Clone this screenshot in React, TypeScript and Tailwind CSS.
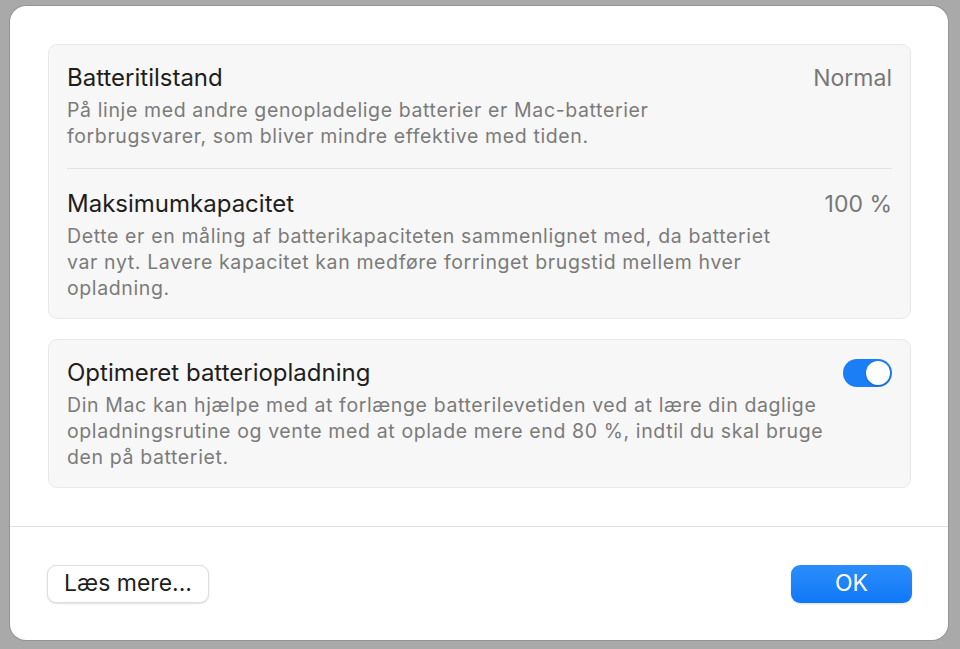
import React from 'react';

const font = { fontFamily: 'Inter, "Liberation Sans", sans-serif' };

const Desc: React.FC<{ lines: string[] }> = ({ lines }) => (
  <div className="mt-[5px] text-[19.5px] leading-[26px] text-[#7b7b7b] tracking-[0.62px]">
    {lines.map((l, i) => (
      <div key={i} className="whitespace-nowrap">{l}</div>
    ))}
  </div>
);

export default function App() {
  return (
    <div
      className="w-[960px] h-[649px] overflow-hidden bg-[#a9a9a9] pt-[6px] pl-[10px] antialiased"
      style={font}
    >
      <div className="w-[938px] h-[634px] bg-white rounded-[16px] flex flex-col shadow-[0_0_0_1px_rgba(0,0,0,0.12)]">
        <div className="pl-[38px] pr-[37px] pt-[38px] flex flex-col gap-[20px]">
          {/* battery health + capacity */}
          <div className="bg-[#f7f7f7] border border-[#e9e9e9] rounded-[9px] px-[18px]">
            <div className="pt-[19px] pb-[19px] border-b border-[#e3e3e3]">
              <div className="flex justify-between items-center h-[28px]">
                <span className="text-[24px] text-[#1e1e1e]">Batteritilstand</span>
                <span className="text-[23px] text-[#777]">Normal</span>
              </div>
              <Desc
                lines={[
                  'På linje med andre genopladelige batterier er Mac-batterier',
                  'forbrugsvarer, som bliver mindre effektive med tiden.',
                ]}
              />
            </div>
            <div className="pt-[21px] pb-[17px]">
              <div className="flex justify-between items-center h-[28px]">
                <span className="text-[24px] text-[#1e1e1e]">Maksimumkapacitet</span>
                <span className="text-[23px] text-[#777]">100 %</span>
              </div>
              <Desc
                lines={[
                  'Dette er en måling af batterikapaciteten sammenlignet med, da batteriet',
                  'var nyt. Lavere kapacitet kan medføre forringet brugstid mellem hver',
                  'opladning.',
                ]}
              />
            </div>
          </div>

          {/* optimized charging */}
          <div className="bg-[#f7f7f7] border border-[#e9e9e9] rounded-[9px] px-[18px] pt-[19px] pb-[17px]">
            <div className="flex justify-between items-center h-[28px]">
              <span className="text-[24px] text-[#1e1e1e]">Optimeret batteriopladning</span>
              <div className="w-[49px] h-[28px] rounded-full bg-[#1a7ff6] flex items-center justify-end pr-[2px]">
                <div className="w-[24px] h-[24px] rounded-full bg-white shadow-[0_1px_2px_rgba(0,0,0,0.25)]" />
              </div>
            </div>
            <Desc
              lines={[
                'Din Mac kan hjælpe med at forlænge batterilevetiden ved at lære din daglige',
                'opladningsrutine og vente med at oplade mere end 80 %, indtil du skal bruge',
                'den på batteriet.',
              ]}
            />
          </div>
        </div>

        <div className="mt-auto border-t border-[#e2e2e2] h-[114px] pl-[37px] pr-[36px] flex items-center justify-between">
          <button className="h-[38px] w-[162px] rounded-[9px] bg-white border border-[#dedede] shadow-[0_1px_2px_rgba(0,0,0,0.12)] text-[23px] text-[#1e1e1e]">
            Læs mere...
          </button>
          <button className="h-[38px] w-[121px] rounded-[9px] bg-gradient-to-b from-[#2b8dfc] to-[#0f78f7] text-[23px] text-white shadow-[0_1px_2px_rgba(0,0,0,0.15)]">
            OK
          </button>
        </div>
      </div>
    </div>
  );
}
